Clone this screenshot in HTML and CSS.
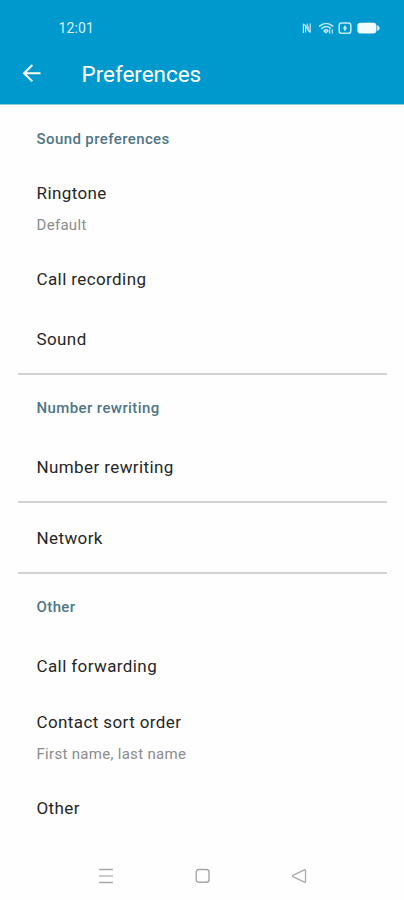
FILE: index.html
```html
<!DOCTYPE html>
<html lang="en">
<head>
<meta charset="utf-8">
<title>Preferences</title>
<link rel="stylesheet" href="styles.css">
</head>
<body>
<header class="header">
  <div class="status">
    <span class="time">12:01</span>
    <svg class="status-icons" width="80" height="14" viewBox="0 0 80 14" fill="none" stroke="#c4e9f7" stroke-width="1.2" stroke-linecap="round" stroke-linejoin="round">
      <path d="M3.4 11.5V3.2l2.2 1.6v6.2M5.6 5l3.4 4.8M7.2 3v2M10.2 2.8v8.4l-2-1.6V5.5"/>
      <path d="M19.6 5.1c4-3.5 9.2-3.5 13.2 0M21.8 7.5c2.8-2.4 6-2.4 8.6-.4M24 9.7c1.4-1.2 2.8-1.2 4 0L26 11.8z" stroke-width="1.5"/>
      <path d="M29.7 12.2V8.8M32.3 8.6v3.6" stroke-width="1.1"/>
      <rect x="39.2" y="1.9" width="11.6" height="10.4" rx="2.4" stroke-width="1.5"/>
      <path d="M45 5.3v3.8M44 7.2h2" stroke-width="1.7"/>
      <rect x="57.4" y="1.8" width="19" height="10.6" rx="3" fill="#f2fbfe" stroke="none"/>
      <path d="M77.2 4.6c3.2.6 3.2 4.6 0 5.2z" fill="#d8f1fb" stroke="none"/>
    </svg>
  </div>
  <div class="toolbar">
    <svg class="back" width="20" height="20" viewBox="0 0 20 20" fill="none" stroke="#fff" stroke-width="2">
      <path d="M18.5 9.2H2.6M10.3 1L2.1 9.2l8.2 8.2"/>
    </svg>
    <h1 class="title">Preferences</h1>
  </div>
</header>
<main class="list">
  <section class="group">
    <h2 class="heading">Sound preferences</h2>
    <div class="item detailed"><div class="name ringtone">Ringtone</div><div class="value default">Default</div></div>
    <div class="item name recording">Call recording</div>
    <div class="item name sound">Sound</div>
  </section>
  <section class="group">
    <h2 class="heading rewriting">Number rewriting</h2>
    <div class="item name rewriting-item">Number rewriting</div>
  </section>
  <section class="group">
    <div class="item name network">Network</div>
  </section>
  <section class="group">
    <h2 class="heading other-heading">Other</h2>
    <div class="item name forwarding">Call forwarding</div>
    <div class="item detailed"><div class="name sort">Contact sort order</div><div class="value order">First name, last name</div></div>
    <div class="item name other">Other</div>
  </section>
</main>
<nav class="navbar">
  <svg width="16" height="16" viewBox="0 0 16 16" fill="none" stroke="#aaa" stroke-width="1.3"><path d="M1 1.5h14M1 14.5h14"/><path d="M1 8h14" stroke="#ccc" stroke-width="2"/></svg>
  <svg width="16" height="16" viewBox="0 0 16 16" fill="none" stroke="#a6a6a6" stroke-width="1.4"><rect x="1.2" y="1.5" width="12.8" height="12.8" rx="2.5"/></svg>
  <svg width="16" height="16" viewBox="0 0 16 16" fill="none" stroke="#aaa" stroke-width="1.3" stroke-linejoin="round"><path d="M13.5 1.8Q14.5 1.4 14.5 2.6v10.8q0 1.2-1 .8L1.8 8.6q-.8-.6 0-1.2z"/></svg>
</nav>
</body>
</html>
```
FILE: styles.css
```css
* { box-sizing: border-box; }
body {
  margin: 0;
  height: 900px;
  display: flex;
  flex-direction: column;
  background: #fefefe;
  font-family: Roboto, "Liberation Sans", sans-serif;
  color: #262626;
  overflow: hidden;
}
.header {
  height: 105px;
  background: #0099cd;
  border-bottom: 1px solid #8ccbe3;
  color: #fff;
}
.status {
  height: 44px;
  padding: 11px 24px 0 58.5px;
  display: flex;
  justify-content: space-between;
  align-items: center;
}
.time { font-size: 14px; line-height: 20px; letter-spacing: 0.1px; color: #d8f1fb; }
.toolbar {
  height: 60px;
  padding-left: 22px;
  display: flex;
  align-items: center;
}
.title {
  margin: 0 0 0 39.5px;
  font-size: 22.5px;
  line-height: 28px;
  font-weight: 400;
  letter-spacing: -0.05px;
}
.list {
  height: 747px;
  padding: 24px 17px 0 18px;
}
.group + .group { border-top: 2px solid #d2d2d2; }
.heading, .item { margin: 0; padding-left: 18.5px; }
.heading { font-size: 15px; line-height: 20px; font-weight: 500; letter-spacing: 0.4px; color: #4f7686; }
.name { font-size: 17px; line-height: 20px; letter-spacing: 0.4px; }
.value { font-size: 15px; line-height: 20px; letter-spacing: 0.3px; color: #8c8c8c; }
.ringtone { margin-top: 34px; }
.default, .order { margin-top: 12px; }
.recording { margin-top: 34px; }
.sound { margin: 40px 0 24px; }
.rewriting { margin-top: 23px; }
.rewriting-item { margin: 39px 0 24px; }
.network { margin: 25px 0 24px; }
.other-heading { margin-top: 23px; }
.forwarding { margin-top: 39px; }
.sort { margin-top: 36px; }
.other { margin-top: 34px; }
.navbar {
  height: 48px;
  padding: 0 97px 0 98px;
  display: flex;
  align-items: center;
  justify-content: space-between;
}
```
